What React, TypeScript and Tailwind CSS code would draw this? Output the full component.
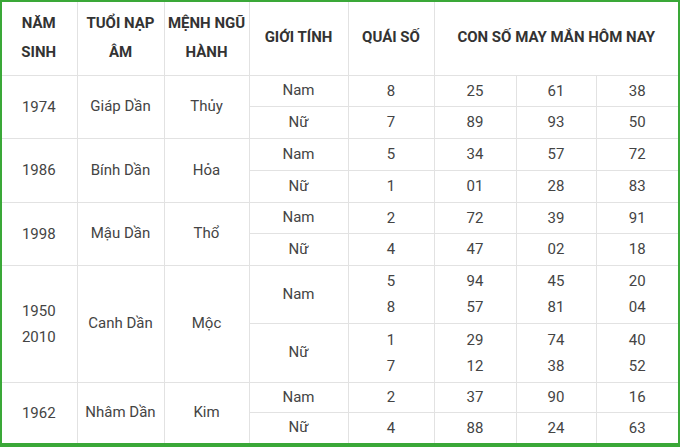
import React from "react";

type Sub = { g: string; q: string[]; n: string[][] };
type Row = { years: string[]; tuoi: string; menh: string; subs: Sub[]; h: [number, number] };

const rows: Row[] = [
  { years: ["1974"], tuoi: "Giáp Dần", menh: "Thủy", h: [31, 32], subs: [
    { g: "Nam", q: ["8"], n: [["25"], ["61"], ["38"]] },
    { g: "Nữ", q: ["7"], n: [["89"], ["93"], ["50"]] },
  ]},
  { years: ["1986"], tuoi: "Bính Dần", menh: "Hỏa", h: [32, 32], subs: [
    { g: "Nam", q: ["5"], n: [["34"], ["57"], ["72"]] },
    { g: "Nữ", q: ["1"], n: [["01"], ["28"], ["83"]] },
  ]},
  { years: ["1998"], tuoi: "Mậu Dần", menh: "Thổ", h: [31, 32], subs: [
    { g: "Nam", q: ["2"], n: [["72"], ["39"], ["91"]] },
    { g: "Nữ", q: ["4"], n: [["47"], ["02"], ["18"]] },
  ]},
  { years: ["1950", "2010"], tuoi: "Canh Dần", menh: "Mộc", h: [58, 59], subs: [
    { g: "Nam", q: ["5", "8"], n: [["94", "57"], ["45", "81"], ["20", "04"]] },
    { g: "Nữ", q: ["1", "7"], n: [["29", "12"], ["74", "38"], ["40", "52"]] },
  ]},
  { years: ["1962"], tuoi: "Nhâm Dần", menh: "Kim", h: [30, 31], subs: [
    { g: "Nam", q: ["2"], n: [["37"], ["90"], ["16"]] },
    { g: "Nữ", q: ["4"], n: [["88"], ["24"], ["63"]] },
  ]},
];

const td = "border border-[#e2e2e2] text-center align-middle p-0";

function Lines({ items }: { items: string[] }) {
  return (
    <div className="flex flex-col leading-[26px]">
      {items.map((t, i) => (
        <span key={i}>{t}</span>
      ))}
    </div>
  );
}

export default function App() {
  return (
    <div className="w-[680px] h-[447px] bg-white overflow-hidden">
      <div className="w-[680px] h-[447px] border-2 border-b-[4px] border-[#3aa838] bg-white overflow-hidden">
        <table
          className="table-fixed border-collapse text-[15px] text-[#444] -mt-px -ml-px"
          style={{ fontFamily: "Roboto, 'Noto Sans', sans-serif", width: 677 }}
        >
          <colgroup>
            <col className="w-[76px]" />
            <col className="w-[87px]" />
            <col className="w-[85px]" />
            <col className="w-[99px]" />
            <col className="w-[86px]" />
            <col className="w-[82px]" />
            <col className="w-[80px]" />
            <col className="w-[82px]" />
          </colgroup>
          <thead>
            <tr className="h-[74px] font-bold text-[#333] text-[15px] leading-[29px]">
              <th className={td + " border-t-0 border-l-0"}>NĂM<br />SINH</th>
              <th className={td + " border-t-0"}>TUỔI NẠP<br />ÂM</th>
              <th className={td + " border-t-0"}>MỆNH NGŨ<br />HÀNH</th>
              <th className={td + " border-t-0"}>GIỚI TÍNH</th>
              <th className={td + " border-t-0"}>QUÁI SỐ</th>
              <th className={td + " border-t-0 border-r-0"} colSpan={3}>CON SỐ MAY MẮN HÔM NAY</th>
            </tr>
          </thead>
          <tbody>
            {rows.map((r, ri) =>
              r.subs.map((s, si) => (
                <tr key={ri + "-" + si} style={{ height: r.h[si] }}>
                  {si === 0 && (
                    <>
                      <td className={td + " border-l-0"} rowSpan={2}>
                        <Lines items={r.years} />
                      </td>
                      <td className={td} rowSpan={2}>{r.tuoi}</td>
                      <td className={td} rowSpan={2}>{r.menh}</td>
                    </>
                  )}
                  <td className={td}>{s.g}</td>
                  <td className={td}><Lines items={s.q} /></td>
                  <td className={td}><Lines items={s.n[0]} /></td>
                  <td className={td}><Lines items={s.n[1]} /></td>
                  <td className={td + " border-r-0"}><Lines items={s.n[2]} /></td>
                </tr>
              ))
            )}
          </tbody>
        </table>
      </div>
    </div>
  );
}
